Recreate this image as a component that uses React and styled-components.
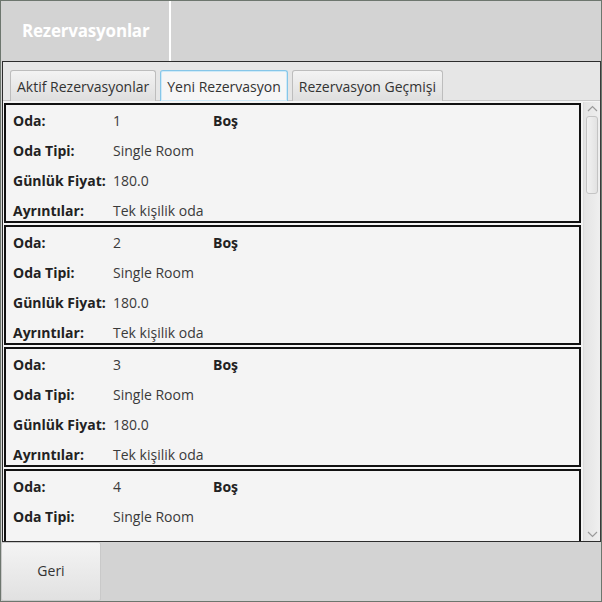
import React from "react";
import styled, { createGlobalStyle } from "styled-components";

const Global = createGlobalStyle`
  html, body { margin: 0; padding: 0; background: #d3d3d3; }
  * { box-sizing: border-box; }
  body { font-family: "Open Sans", "Noto Sans", sans-serif; }
`;

const Window = styled.div`
  width: 602px;
  height: 602px;
  border: 1px solid #6d766e;
  background: #d3d3d3;
  display: flex;
  flex-direction: column;
`;

const Header = styled.header`
  height: 60px;
  display: flex;
  background: #d3d3d3;
`;

const TitleBlock = styled.div`
  width: 170px;
  border-right: 2px solid #ffffff;
  display: flex;
  align-items: center;
  padding-left: 21px;
  padding-bottom: 1px;
  color: #ffffff;
  font-weight: 700;
  font-size: 17px;
  letter-spacing: -0.2px;
`;

const TabPane = styled.section`
  flex: 1;
  min-height: 0;
  margin-left: 1px;
  border-top: 1px solid #2c2c2c;
  border-left: 1px solid #2c2c2c;
  border-right: 1px solid #3a3a3a;
  border-bottom: 1px solid #2c2c2c;
  display: flex;
  flex-direction: column;
  background: #f4f4f4;
`;

const TabBar = styled.div`
  height: 39px;
  padding: 8px 0 0 7px;
  display: flex;
  gap: 4px;
  background: #e6e6e6;
  border-bottom: 1px solid #c8c8c8;
`;

const Tab = styled.div`
  height: 31px;
  padding: 0 6px;
  display: flex;
  align-items: center;
  font-size: 14px;
  color: #333333;
  border-radius: 3px 3px 0 0;
  border: 1px solid ${(p) => (p.$active ? "#86c6e8" : "#bdbdbd")};
  border-bottom: none;
  background: ${(p) =>
    p.$active ? "#f6f6f6" : "linear-gradient(#f3f3f3, #dedede)"};
  box-shadow: ${(p) => (p.$active ? "inset 0 0 0 1px #cfeaf8" : "none")};
`;

const Body = styled.div`
  flex: 1;
  min-height: 0;
  display: flex;
  padding: 2px 0 0 1px;
  overflow: hidden;
`;

const List = styled.div`
  flex: 1;
  display: flex;
  flex-direction: column;
  gap: 2px;
  overflow: hidden;
`;

const Card = styled.div`
  flex: none;
  width: 577px;
  height: 120px;
  border: 2px solid #111111;
  background: #f4f4f4;
  padding: 0 0 0 7px;
  display: grid;
  grid-template-columns: 100px 100px 100px;
  grid-auto-rows: 30px;
  align-items: center;
  font-size: 14px;
  color: #333333;
`;

const Label = styled.span`
  font-weight: 700;
  color: #222222;
`;

const Value = styled.span`
  color: #3a3a3a;
`;

const ScrollBar = styled.div`
  width: 17px;
  margin-left: 2px;
  margin-top: -1px;
  background: linear-gradient(90deg, #e4e4e4, #efefef);
  display: flex;
  flex-direction: column;
  align-items: center;
  border-left: 1px solid #dcdcdc;
`;

const Arrow = styled.div`
  height: 13px;
  width: 100%;
  display: flex;
  align-items: center;
  justify-content: center;
`;

const Track = styled.div`
  flex: 1;
  width: 100%;
  padding: 1px 2px 0;
`;

const Thumb = styled.div`
  height: 78px;
  border: 1px solid #c4c4c4;
  border-radius: 3px;
  background: linear-gradient(90deg, #f2f2f2, #e2e2e2);
`;

const BottomBar = styled.footer`
  height: 59px;
  display: flex;
  background: #d3d3d3;
`;

const Button = styled.button`
  width: 100px;
  height: 59px;
  border: 1px solid #c9c9c9;
  border-radius: 2px;
  background: linear-gradient(#f4f4f4, #e1e1e1);
  font-family: "Open Sans", "Noto Sans", sans-serif;
  font-size: 14px;
  color: #333333;
  padding: 0 0 2px;
`;

const Chevron = ({ up }) => (
  <svg width="11" height="7" viewBox="0 0 11 7">
    <path
      d={up ? "M1 6 L5.5 1.5 L10 6" : "M1 1 L5.5 5.5 L10 1"}
      fill="none"
      stroke="#9a9a9a"
      strokeWidth="1.2"
    />
  </svg>
);

const rooms = [1, 2, 3, 4];

export default function App() {
  return (
    <>
      <Global />
      <Window>
        <Header>
          <TitleBlock>Rezervasyonlar</TitleBlock>
        </Header>
        <TabPane>
          <TabBar>
            <Tab>Aktif Rezervasyonlar</Tab>
            <Tab $active>Yeni Rezervasyon</Tab>
            <Tab>Rezervasyon Geçmişi</Tab>
          </TabBar>
          <Body>
            <List>
              {rooms.map((n) => (
                <Card key={n}>
                  <Label>Oda:</Label>
                  <Value>{n}</Value>
                  <Label>Boş</Label>
                  <Label>Oda Tipi:</Label>
                  <Value>Single Room</Value>
                  <span />
                  <Label>Günlük Fiyat:</Label>
                  <Value>180.0</Value>
                  <span />
                  <Label>Ayrıntılar:</Label>
                  <Value>Tek kişilik oda</Value>
                  <span />
                </Card>
              ))}
            </List>
            <ScrollBar>
              <Arrow>
                <Chevron up />
              </Arrow>
              <Track>
                <Thumb />
              </Track>
              <Arrow>
                <Chevron />
              </Arrow>
            </ScrollBar>
          </Body>
        </TabPane>
        <BottomBar>
          <Button>Geri</Button>
        </BottomBar>
      </Window>
    </>
  );
}
